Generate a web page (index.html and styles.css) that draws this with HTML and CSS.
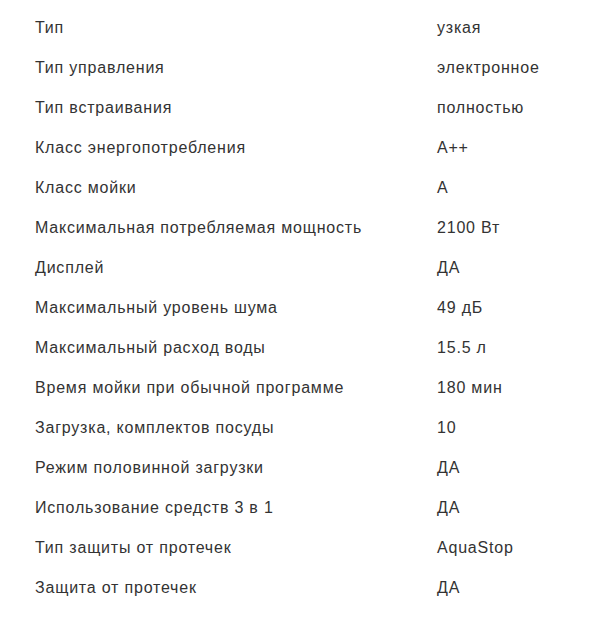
FILE: index.html
```html
<!DOCTYPE html>
<html lang="ru">
<head>
<meta charset="utf-8">
<link rel="stylesheet" href="styles.css">
</head>
<body>
<div class="specs">
  <div class="row"><span class="name">Тип</span><span class="val">узкая</span></div>
  <div class="row"><span class="name">Тип управления</span><span class="val">электронное</span></div>
  <div class="row"><span class="name">Тип встраивания</span><span class="val">полностью</span></div>
  <div class="row"><span class="name">Класс энергопотребления</span><span class="val">A++</span></div>
  <div class="row"><span class="name">Класс мойки</span><span class="val">A</span></div>
  <div class="row"><span class="name">Максимальная потребляемая мощность</span><span class="val">2100 Вт</span></div>
  <div class="row"><span class="name">Дисплей</span><span class="val">ДА</span></div>
  <div class="row"><span class="name">Максимальный уровень шума</span><span class="val">49 дБ</span></div>
  <div class="row"><span class="name">Максимальный расход воды</span><span class="val">15.5 л</span></div>
  <div class="row"><span class="name">Время мойки при обычной программе</span><span class="val">180 мин</span></div>
  <div class="row"><span class="name">Загрузка, комплектов посуды</span><span class="val">10</span></div>
  <div class="row"><span class="name">Режим половинной загрузки</span><span class="val">ДА</span></div>
  <div class="row"><span class="name">Использование средств 3 в 1</span><span class="val">ДА</span></div>
  <div class="row"><span class="name">Тип защиты от протечек</span><span class="val">AquaStop</span></div>
  <div class="row"><span class="name">Защита от протечек</span><span class="val">ДА</span></div>
</div>
</body>
</html>
```

FILE: styles.css
```css
body {
  margin: 8px;
  background: #fff;
  font-family: "Liberation Sans", Arial, sans-serif;
  font-size: 16px;
  letter-spacing: 0.8px;
  color: #333;
}
.specs {
  display: flex;
  flex-direction: column;
  padding-left: 27px;
}
.row {
  display: grid;
  grid-template-columns: 402px auto;
  height: 40px;
  line-height: 40px;
}
```
